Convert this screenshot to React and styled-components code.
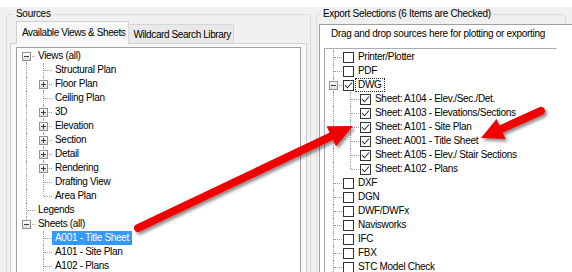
import React from "react";
import styled, { createGlobalStyle, css } from "styled-components";

const GlobalStyle = createGlobalStyle`
  html, body {
    margin: 0;
    padding: 0;
    background: #ffffff;
  }
  body {
    font-family: "Liberation Sans", Arial, sans-serif;
    font-size: 10px;
    letter-spacing: -0.3px;
    color: #000;
  }
`;

const Screen = styled.div`
  position: relative;
  width: 572px;
  height: 272px;
  overflow: hidden;
  background: #ffffff;
  padding-top: 7px;
  box-sizing: border-box;
`;

const Dialog = styled.div`
  display: flex;
  gap: 5px;
  height: 265px;
  padding: 1px 0 0 6px;
  box-sizing: border-box;
  background: #f0f0f0;
`;

const Group = styled.fieldset`
  flex: none;
  width: ${({ $width }) => $width}px;
  margin: 0;
  padding: ${({ $pad }) => $pad};
  border: 1px solid #dcdcdc;
  border-radius: 3px;
  box-sizing: border-box;
  min-width: 0;
  height: 300px;
`;

const Legend = styled.legend`
  padding: 0 2px;
  margin-left: 4px;
  line-height: 12px;
  font-size: 10px;
`;

// --- tabs

const TabStrip = styled.div`
  display: flex;
  align-items: flex-end;
  height: 23px;
  margin: 0 0 -1px 6px;
  position: relative;
  z-index: 1;
`;

const Tab = styled.div`
  box-sizing: border-box;
  display: flex;
  align-items: center;
  white-space: nowrap;
  letter-spacing: -0.4px;
  border: 1px solid #d0d0d0;
  border-bottom: none;
  ${({ $active }) =>
    $active
      ? css`
          height: 23px;
          padding: 0 3px 2px 5px;
          background: #f8f8f8;
        `
      : css`
          height: 19px;
          margin: 0 0 1px -1px;
          padding: 1px 2px 0 4px;
          background: #e9e9e9;
          border-color: #d6d6d6;
        `}
`;

const TabPage = styled.div`
  width: 297px;
  height: 240px;
  box-sizing: border-box;
  border: 1px solid #d0d0d0;
  background: #f8f8f8;
  padding: 3px 5px 0;
`;

// --- trees

const TreeBox = styled.div`
  box-sizing: border-box;
  background: #ffffff;
  border: 1px solid ${({ $border }) => $border};
  ${({ $open }) => $open && "border-right-color: transparent;"}
  width: ${({ $width }) => $width}px;
  height: 240px;
  padding: 1px 0 0 ${({ $indent }) => $indent}px;
  overflow: hidden;
`;

const Row = styled.div`
  display: flex;
  align-items: center;
  height: 14px;
  white-space: nowrap;
`;

const Guide = styled.span`
  position: relative;
  flex: none;
  width: 17px;
  height: 14px;

  &::before {
    content: "";
    position: absolute;
    left: 8px;
    border-left: 1px dotted #a0a0a0;
    display: ${({ $kind }) => ($kind === "blank" ? "none" : "block")};
    top: ${({ $kind }) => ($kind === "first" ? "7px" : "0")};
    bottom: ${({ $kind }) => ($kind === "elbow" ? "7px" : "0")};
  }

  &::after {
    content: "";
    position: absolute;
    left: 9px;
    right: 0;
    top: 7px;
    border-top: 1px dotted #a0a0a0;
    display: ${({ $kind }) =>
      $kind === "pipe" || $kind === "blank" ? "none" : "block"};
  }
`;

const Expander = styled.span`
  position: absolute;
  z-index: 1;
  left: 4px;
  top: 3px;
  width: 9px;
  height: 9px;
  box-sizing: border-box;
  border: 1px solid #919191;
  background: linear-gradient(#ffffff, #dedede);

  &::before {
    content: "";
    position: absolute;
    left: 1px;
    top: 3px;
    width: 5px;
    height: 1px;
    background: #3c3c3c;
  }

  &::after {
    content: "";
    position: absolute;
    left: 3px;
    top: 1px;
    width: 1px;
    height: 5px;
    background: #3c3c3c;
    display: ${({ $open }) => ($open ? "none" : "block")};
  }
`;

const Label = styled.span`
  line-height: 12px;
  padding: 0 2px;
  border: 1px ${({ $focus }) => ($focus ? "dotted #222" : "solid transparent")};
  margin-left: ${({ $gap }) => $gap}px;
  ${({ $selected }) =>
    $selected &&
    css`
      background: #3399ff;
      color: #ffffff;
    `}
`;

const Box = styled.span`
  flex: none;
  width: 11px;
  height: 11px;
  margin-left: 1px;
  box-sizing: border-box;
  border: 1px solid #333;
  background: #fff;
  display: flex;
  align-items: center;
  justify-content: center;
`;

const Panel = styled.div`
  width: 262px;
  margin-left: 2px;
  margin-top: 4px;
  height: 260px;
  background: #ffffff;
  border-left: 1px solid #a0a0a0;
  border-top: 1px solid #a0a0a0;
  padding-top: 3px;
`;

const Hint = styled.div`
  line-height: 12px;
  padding-left: 11px;
  white-space: nowrap;
  margin-bottom: 8px;
`;

const TreeSlot = styled.div`
  padding-left: 4px;
`;

const ArrowLayer = styled.svg`
  position: absolute;
  left: 0;
  top: 0;
  pointer-events: none;
`;

const sources = [
  { g: ["first"], text: "Views (all)", exp: "open" },
  { g: ["pipe", "tee"], text: "Structural Plan" },
  { g: ["pipe", "tee"], text: "Floor Plan", exp: "closed" },
  { g: ["pipe", "tee"], text: "Ceiling Plan" },
  { g: ["pipe", "tee"], text: "3D", exp: "closed" },
  { g: ["pipe", "tee"], text: "Elevation", exp: "closed" },
  { g: ["pipe", "tee"], text: "Section", exp: "closed" },
  { g: ["pipe", "tee"], text: "Detail", exp: "closed" },
  { g: ["pipe", "tee"], text: "Rendering", exp: "closed" },
  { g: ["pipe", "tee"], text: "Drafting View" },
  { g: ["pipe", "elbow"], text: "Area Plan" },
  { g: ["tee"], text: "Legends" },
  { g: ["elbow"], text: "Sheets (all)", exp: "open" },
  { g: ["blank", "tee"], text: "A001 - Title Sheet", selected: true },
  { g: ["blank", "tee"], text: "A101 - Site Plan" },
  { g: ["blank", "tee"], text: "A102 - Plans" },
];

const sheets = [
  "Sheet: A104 - Elev./Sec./Det.",
  "Sheet: A103 - Elevations/Sections",
  "Sheet: A101 - Site Plan",
  "Sheet: A001 - Title Sheet",
  "Sheet: A105 - Elev./ Stair Sections",
  "Sheet: A102 - Plans",
];

const exports = [
  { g: ["tee"], text: "Printer/Plotter" },
  { g: ["tee"], text: "PDF" },
  { g: ["tee"], text: "DWG", exp: "open", checked: true, focus: true },
  ...sheets.map((text, i) => ({
    g: ["pipe", i === sheets.length - 1 ? "elbow" : "tee"],
    text,
    checked: true,
  })),
  ...["DXF", "DGN", "DWF/DWFx", "Navisworks", "IFC", "FBX", "STC Model Check"].map(
    (text) => ({ g: ["tee"], text })
  ),
];

function Check({ checked }) {
  return (
    <Box>
      {checked && (
        <svg width="9" height="9" viewBox="0 0 9 9">
          <path d="M1 4.2 L3.5 6.8 L8 1.5" fill="none" stroke="#333" strokeWidth="1.1" />
        </svg>
      )}
    </Box>
  );
}

function TreeRow({ item, checkable }) {
  return (
    <Row>
      {item.g.map((kind, i) => (
        <Guide key={i} $kind={kind}>
          {i === item.g.length - 1 && item.exp && <Expander $open={item.exp === "open"} />}
        </Guide>
      ))}
      {checkable && <Check checked={item.checked} />}
      <Label $gap={checkable ? 1 : 0} $selected={item.selected} $focus={item.focus}>
        {item.text}
      </Label>
    </Row>
  );
}

function Arrow({ from, to, head = 24, half = 11 }) {
  const dx = to[0] - from[0];
  const dy = to[1] - from[1];
  const len = Math.hypot(dx, dy);
  const ux = dx / len;
  const uy = dy / len;
  const bx = to[0] - ux * head;
  const by = to[1] - uy * head;
  const px = -uy * half;
  const py = ux * half;
  return (
    <g filter="url(#shadow)">
      <line x1={from[0]} y1={from[1]} x2={bx + ux * 2} y2={by + uy * 2} stroke="#f00000" strokeWidth="8" strokeLinecap="round" />
      <polygon points={`${to[0]},${to[1]} ${bx + px},${by + py} ${bx - px},${by - py}`} fill="#f00000" />
    </g>
  );
}

export default function App() {
  return (
    <>
      <GlobalStyle />
      <Screen>
        <Dialog>
          <Group $width={305} $pad="1px 3px 0">
            <Legend>Sources</Legend>
            <TabStrip>
              <Tab $active>Available Views &amp; Sheets</Tab>
              <Tab>Wildcard Search Library</Tab>
            </TabStrip>
            <TabPage>
              <TreeBox $border="#a0a0a0" $width={285} $indent={1}>
                {sources.map((item) => (
                  <TreeRow key={item.text} item={item} />
                ))}
              </TreeBox>
            </TabPage>
          </Group>
          <Group $width={250} $pad="0">
            <Legend>Export Selections (6 Items are Checked)</Legend>
            <Panel>
              <Hint>Drag and drop sources here for plotting or exporting</Hint>
              <TreeSlot>
                <TreeBox $border="#a5acb5" $width={233} $indent={0} $open>
                  {exports.map((item) => (
                    <TreeRow key={item.text} item={item} checkable />
                  ))}
                </TreeBox>
              </TreeSlot>
            </Panel>
          </Group>
        </Dialog>
        <ArrowLayer width="572" height="272" viewBox="0 0 572 272">
          <defs>
            <filter id="shadow" x="-20%" y="-20%" width="140%" height="140%">
              <feDropShadow dx="2" dy="2.5" stdDeviation="1.5" floodColor="#000" floodOpacity="0.45" />
            </filter>
          </defs>
          <Arrow from={[138, 228]} to={[353, 126]} />
          <Arrow from={[541, 111]} to={[481, 138]} head={22} half={11} />
        </ArrowLayer>
      </Screen>
    </>
  );
}
